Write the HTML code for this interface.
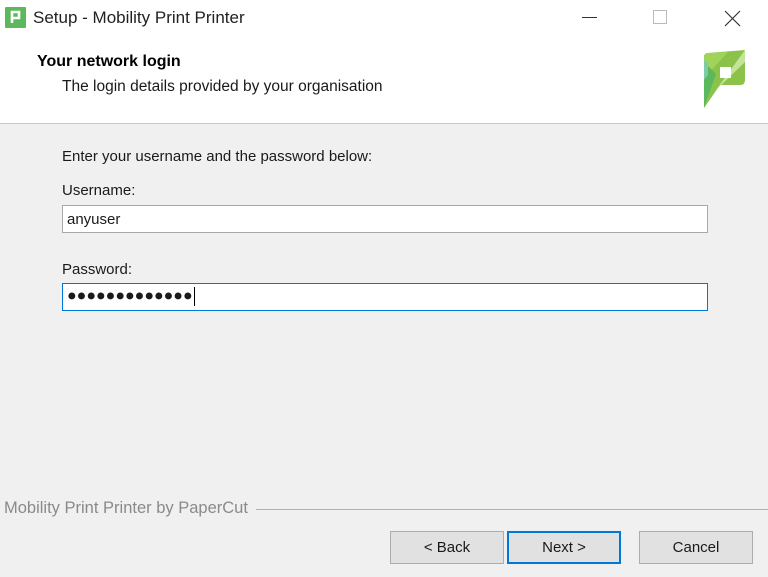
<!DOCTYPE html>
<html><head><meta charset="utf-8"><style>
*{margin:0;padding:0;box-sizing:border-box}
body{width:768px;height:577px;background:#f0f0f0;font-family:"Liberation Sans",sans-serif;position:relative;overflow:hidden;color:#1a1a1a}
.a{position:absolute}
.hdr{left:0;top:0;width:768px;height:124px;background:#fff;border-bottom:1px solid #c9c9c9}
.t{font-size:15px;white-space:nowrap}
.box{background:#fff;border:1px solid #a8a8a8;height:28px;font-size:15px;padding:5px 4px}
.btn{top:531px;height:33px;background:#e1e1e1;border:1px solid #adadad;font-size:15px;text-align:center;line-height:31px}
</style></head><body>
<div class="a hdr"></div>
<svg class="a" style="left:5px;top:7px" width="21" height="21" viewBox="0 0 21 21"><rect width="21" height="21" rx="1" fill="#5cb85c"/><path d="M7 16V5H14V11H7" fill="none" stroke="#fff" stroke-width="2.6"/></svg>
<div class="a t" style="left:33px;top:8px;font-size:17px;color:#222">Setup - Mobility Print Printer</div>
<div class="a" style="left:582px;top:17px;width:15px;height:1px;background:#333"></div>
<div class="a" style="left:653px;top:10px;width:14px;height:14px;border:1px solid #bbb"></div>
<svg class="a" style="left:724px;top:10px" width="17" height="17"><path d="M1 1L16 16M16 1L1 16" stroke="#333" stroke-width="1.2"/></svg>
<div class="a t" style="left:37px;top:53px;font-weight:bold;font-size:16px;color:#000">Your network login</div>
<div class="a t" style="left:62px;top:78px;font-size:15.5px">The login details provided by your organisation</div>
<svg class="a" style="left:704px;top:50px" width="42" height="58" viewBox="0 0 42 58">
<path d="M0 7Q0 3 4 3L41 0V30Q41 35 36 35H16L0 58Z" fill="#8bc34a"/>
<path d="M0 7Q0 3 4 3L24 2L0 28Z" fill="#9fd35a"/>
<path d="M41 0V12L12 40Z" fill="#c5e39a"/>
<path d="M0 12L12 24L0 58Z" fill="#5cb85c"/>
<path d="M0 10L4 13V25L0 30Z" fill="#7fcba8"/>
<rect x="16" y="17" width="11" height="11" fill="#fff"/>
</svg>
<div class="a t" style="left:62px;top:148px">Enter your username and the password below:</div>
<div class="a t" style="left:62px;top:182px">Username:</div>
<div class="a box" style="left:62px;top:205px;width:646px">anyuser</div>
<div class="a t" style="left:62px;top:261px">Password:</div>
<div class="a box" style="left:62px;top:283px;width:646px;border-color:#0078d7;padding-top:3px;font-size:16px">●●●●●●●●●●●●●<span style="display:inline-block;width:1px;height:19px;background:#000;vertical-align:middle;margin-left:1px"></span></div>
<div class="a t" style="left:4px;top:499px;color:#8a8a8a;font-size:16.5px">Mobility Print Printer by PaperCut</div>
<div class="a" style="left:256px;top:509px;width:512px;height:1px;background:#b0b0b0"></div>
<div class="a btn" style="left:390px;width:114px">&lt; Back</div>
<div class="a btn" style="left:507px;width:114px;border:2px solid #0078d7;line-height:29px">Next &gt;</div>
<div class="a btn" style="left:639px;width:114px">Cancel</div>
</body></html>
